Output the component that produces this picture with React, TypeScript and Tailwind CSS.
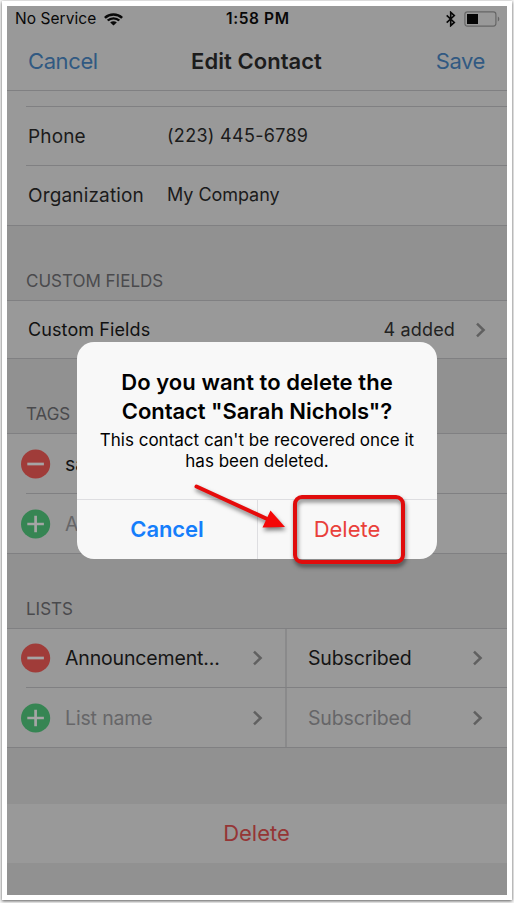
import type { ReactNode } from "react";

function Chevron({ className = "" }: { className?: string }) {
  return (
    <svg className={`shrink-0 ${className}`} width="12" height="16" viewBox="0 0 12 16" fill="none">
      <path d="M2 1.6 8.600 8 2 14.400" stroke="#606060" strokeWidth="2.5" />
    </svg>
  );
}

function RoundIcon({ kind }: { kind: "minus" | "plus" }) {
  return (
    <svg className="ml-[14px] mr-[14px] shrink-0" width="30" height="30" viewBox="0 0 30 30">
      <circle cx="14.6" cy="15" r="14.6" fill={kind === "minus" ? "#a03c39" : "#368553"} />
      <path
        d={kind === "minus" ? "M6.300 15h16.600" : "M6.300 15h16.600M14.600 6.800v16.400"}
        stroke="#a5a5a5"
        strokeWidth="2.7"
      />
    </svg>
  );
}

function SectionTitle({ children, className }: { children: ReactNode; className: string }) {
  return (
    <div className={`flex items-end pl-[19px] text-[17px] leading-5 text-[#4a4a4d] ${className}`}>
      {children}
    </div>
  );
}

function FieldRow({ label, value, valueClass }: { label: string; value: string; valueClass: string }) {
  return (
    <div className="ml-[19px] flex h-[59px] items-center border-t border-[#808082] pl-[2px] text-[19px] leading-7 text-[#1b1b1b]">
      <span className="w-[139px] pt-[2px] tracking-[0.15px]">{label}</span>
      <span className={`text-[18px] leading-7 ${valueClass}`}>{value}</span>
    </div>
  );
}

function ListRow({ kind, name, muted = false }: { kind: "minus" | "plus"; name: string; muted?: boolean }) {
  return (
    <div className={`flex h-full items-center text-[19.5px] tracking-[-0.15px] ${muted ? "text-[#666668]" : "text-[#151515]"}`}>
      <div className="flex h-full w-[278px] items-center">
        <RoundIcon kind={kind} />
        <span className="flex-1 pt-[2px]">{name}</span>
        <Chevron className="mr-[21px]" />
      </div>
      <div className="flex h-full flex-1 items-center border-l-2 border-[#8a8a8b] pl-[21px]">
        <span className="flex-1 pt-[2px]">Subscribed</span>
        <Chevron className="mr-[23px]" />
      </div>
    </div>
  );
}

function StatusBar() {
  return (
    <div className="flex h-[26px] items-center text-[15.5px] text-[#080808]">
      <div className="flex w-[215px] items-center pl-[8px]">
        <span className="w-[89px] whitespace-nowrap tracking-[0.05px]">No Service</span>
        <svg width="19" height="13" viewBox="0 0 19 14" preserveAspectRatio="none">
          <path d="M.9 5.200a12.200 12.200 0 0 1 17.200 0M3.700 8.100a8.200 8.200 0 0 1 11.600 0" fill="none" stroke="#080808" strokeWidth="2.500" />
          <path d="m9.500 13.400-3.300-3.200a4.700 4.700 0 0 1 6.600 0Z" fill="#080808" />
        </svg>
      </div>
      <span className="flex-1 whitespace-nowrap pl-1 font-semibold tracking-[0.6px]">1:58 PM</span>
      <svg className="mr-[8px]" width="10" height="16" viewBox="0 0 10 16" fill="none">
        <path d="M.7 4.400 8.300 11.400 4.700 14.700V1.300l3.600 3.300L.7 11.600" stroke="#080808" strokeWidth="1.600" />
      </svg>
      <svg className="mr-[7px]" width="36" height="16" viewBox="0 0 36 16">
        <rect x=".9" y=".9" width="31" height="14.2" rx="2.5" fill="none" stroke="#666" strokeWidth="1.2" />
        <path d="M3 3h11v10H3z" fill="#050505" />
        <path d="M33.800 5.500v5c2-.8 2-4.200 0-5Z" fill="#666" />
      </svg>
    </div>
  );
}

function DeleteDialog() {
  return (
    <div className="absolute left-[77px] top-[342px] flex h-[217px] w-[360px] flex-col rounded-[17px] bg-[#f8f8f8] text-center text-black">
      <div className="h-[157px] pt-[26px]">
        <h2 className="whitespace-nowrap text-[22px] font-semibold leading-[29px] tracking-[0.06px]">
          Do you want to delete the<br /><span className="tracking-[-0.05px]">Contact "Sarah Nichols"?</span>
        </h2>
        <p className="whitespace-nowrap pt-[4px] text-[17px] leading-[21px]">
          This contact can't be recovered once it<br />has been deleted.
        </p>
      </div>
      <div className="flex flex-1 border-t border-[#dedee1] text-[22px]">
        <button className="w-[181px] border-r border-[#dedee1] font-semibold tracking-[-0.1px] text-[#157efb]">Cancel</button>
        <button className="flex-1 pr-px text-[#e9403a]">Delete</button>
      </div>
    </div>
  );
}

function Annotation() {
  return (
    <svg className="absolute left-0 top-0 drop-shadow-[1px_3px_2px_rgba(0,0,0,0.5)]" width="514" height="903" viewBox="0 0 514 903">
      <path d="m196.500 486.500 74 34" stroke="#e60b0b" strokeWidth="4" strokeLinecap="round" />
      <path d="m285 527-14.500-16.500-8 17Z" fill="#f40808" />
      <rect x="295" y="497" width="108" height="65" rx="7" fill="none" stroke="#e00c0c" strokeWidth="4" />
    </svg>
  );
}

export default function App() {
  return (
    <main className="relative h-[903px] w-[514px] overflow-hidden bg-[#f6f6f6] pl-[2px] pt-px font-['Inter','Liberation_Sans',sans-serif]">
      <div className="h-[899px] w-[510px] bg-white px-[5px] pb-[5px] pt-[5px] shadow-[0_1px_3px_rgba(0,0,0,0.65)]">
        <div className="h-[889px] w-[500px] overflow-hidden bg-[#919191]">
          <div className="h-[220px] border-b border-[#808082] bg-[#999]">
            <StatusBar />
            <header className="flex h-[59px] items-center border-b border-[#808082] px-[21px] text-[22px] text-[#315982]">
              <span className="flex-1 tracking-[-0.4px]">Cancel</span>
              <h1 className="font-semibold tracking-[0.05px] text-[#1c1c1c]">Edit Contact</h1>
              <span className="flex-1 pr-px text-right tracking-[-0.4px]">Save</span>
            </header>
            <div className="h-[15px]" />
            <FieldRow label="Phone" value="(223) 445-6789" valueClass="tracking-[0.3px]" />
            <FieldRow label="Organization" value="My Company" valueClass="tracking-[-0.05px]" />
          </div>
          <SectionTitle className="h-[74px] pb-[9px]">CUSTOM FIELDS</SectionTitle>
          <div className="flex h-[59px] items-center border-y border-[#808082] bg-[#999] pl-[21px] text-[18px] text-[#111]">
            <span className="flex-1 pb-px tracking-[0.1px]">Custom Fields</span>
            <span className="mr-[20px] tracking-[0.15px] text-[#222]">4 added</span>
            <Chevron className="mr-[20px]" />
          </div>
          <SectionTitle className="h-[74px] pb-[9px]">TAGS</SectionTitle>
          <div className="h-[121px] border-y border-[#808082] bg-[#999] text-[19.5px]">
            <div className="flex h-[59px] items-center text-[#151515]"><RoundIcon kind="minus" /><span className="pt-[2px]">sales</span></div>
            <div className="ml-[19px] h-px bg-[#808082]" />
            <div className="flex h-[59px] items-center text-[#666668]"><RoundIcon kind="plus" /><span className="pt-[2px]">Add tag</span></div>
          </div>
          <SectionTitle className="h-[74px] pb-[9px]">LISTS</SectionTitle>
          <div className="h-[120px] border-y border-[#808082] bg-[#999]">
            <div className="h-[58px]"><ListRow kind="minus" name="Announcement..." /></div>
            <div className="ml-[19px] h-px bg-[#808082]" />
            <div className="h-[59px]"><ListRow kind="plus" name="List name" muted /></div>
          </div>
          <div className="mt-[56px] flex h-[59px] items-center justify-center bg-[#999] pr-px text-[22px] text-[#953535]">Delete</div>
        </div>
      </div>
      <DeleteDialog />
      <Annotation />
    </main>
  );
}
